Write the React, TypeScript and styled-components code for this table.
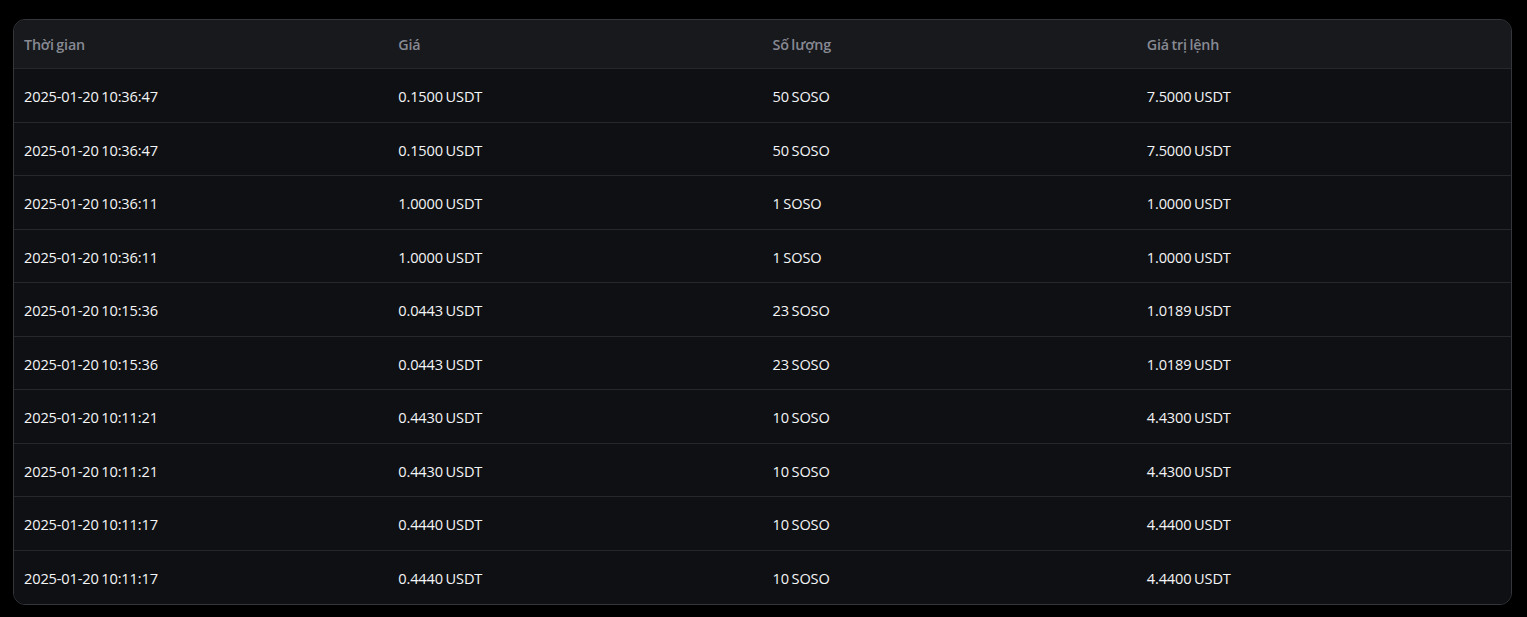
import styled, { createGlobalStyle } from "styled-components";

const GlobalStyle = createGlobalStyle`
  html, body {
    margin: 0;
    background: #000;
  }
  body {
    font-family: "Open Sans", "Noto Sans", sans-serif;
    -webkit-font-smoothing: antialiased;
  }
`;

const Page = styled.div`
  padding: 19px 15px 0 13px;
`;

const Card = styled.div`
  border: 1px solid #34363b;
  border-radius: 12px;
  overflow: hidden;
  background: #0f1013;
`;

const Row = styled.div<{ $head?: boolean }>`
  display: grid;
  grid-template-columns: repeat(4, 1fr);
  align-items: center;
  height: ${(p) => (p.$head ? "49px" : "53.5px")};
  padding-top: ${(p) => (p.$head ? "0" : "2px")};
  box-sizing: border-box;
  background: ${(p) => (p.$head ? "#18191d" : "#0f1013")};
  border-bottom: 1px solid #26282c;
  color: ${(p) => (p.$head ? "#878a93" : "#f4f5f7")};
  font-size: ${(p) => (p.$head ? "14.3px" : "14.6px")};
  font-weight: ${(p) => (p.$head ? 600 : 400)};
  letter-spacing: -0.15px;
  word-spacing: -1px;
  &:last-child {
    border-bottom: none;
  }
`;

const Cell = styled.div`
  padding: 0 10px;
  white-space: nowrap;
`;

interface ITrade {
  time: string;
  price: string;
  qty: string;
  total: string;
}

const trades: ITrade[] = [
  { time: "2025-01-20 10:36:47", price: "0.1500 USDT", qty: "50 SOSO", total: "7.5000 USDT" },
  { time: "2025-01-20 10:36:47", price: "0.1500 USDT", qty: "50 SOSO", total: "7.5000 USDT" },
  { time: "2025-01-20 10:36:11", price: "1.0000 USDT", qty: "1 SOSO", total: "1.0000 USDT" },
  { time: "2025-01-20 10:36:11", price: "1.0000 USDT", qty: "1 SOSO", total: "1.0000 USDT" },
  { time: "2025-01-20 10:15:36", price: "0.0443 USDT", qty: "23 SOSO", total: "1.0189 USDT" },
  { time: "2025-01-20 10:15:36", price: "0.0443 USDT", qty: "23 SOSO", total: "1.0189 USDT" },
  { time: "2025-01-20 10:11:21", price: "0.4430 USDT", qty: "10 SOSO", total: "4.4300 USDT" },
  { time: "2025-01-20 10:11:21", price: "0.4430 USDT", qty: "10 SOSO", total: "4.4300 USDT" },
  { time: "2025-01-20 10:11:17", price: "0.4440 USDT", qty: "10 SOSO", total: "4.4400 USDT" },
  { time: "2025-01-20 10:11:17", price: "0.4440 USDT", qty: "10 SOSO", total: "4.4400 USDT" },
];

function App() {
  return (
    <Page>
      <GlobalStyle />
      <Card>
        <Row $head>
          <Cell>Thời gian</Cell>
          <Cell>Giá</Cell>
          <Cell>Số lượng</Cell>
          <Cell>Giá trị lệnh</Cell>
        </Row>
        {trades.map((t, i) => (
          <Row key={i}>
            <Cell>{t.time}</Cell>
            <Cell>{t.price}</Cell>
            <Cell>{t.qty}</Cell>
            <Cell>{t.total}</Cell>
          </Row>
        ))}
      </Card>
    </Page>
  );
}

export default App;
